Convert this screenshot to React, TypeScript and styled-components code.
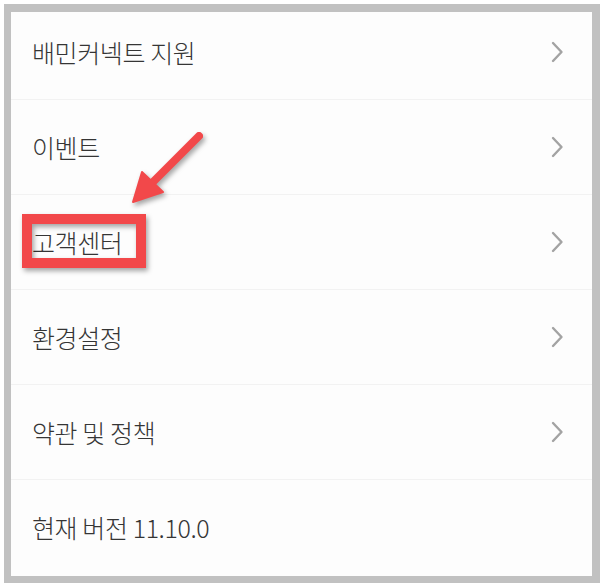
import React from "react";
import styled, { createGlobalStyle } from "styled-components";

const Global = createGlobalStyle`
  html, body { margin: 0; padding: 0; background: #ffffff; }
  body { font-family: "Noto Sans CJK KR", "Noto Sans", sans-serif; }
`;

const Page = styled.div`
  position: relative;
  width: 604px;
  height: 587px;
  padding: 4px;
  box-sizing: border-box;
  background: #ffffff;
`;

const Frame = styled.div`
  height: 100%;
  box-sizing: border-box;
  border-style: solid;
  border-color: #c1c1c1;
  border-width: 8px 8px 7px 7px;
  background: #fdfdfd;
  overflow: hidden;
`;

const List = styled.ul`
  list-style: none;
  margin: -7px 0 0 0;
  padding: 0;
`;

const Row = styled.li`
  display: flex;
  align-items: center;
  justify-content: space-between;
  height: 94px;
  padding: 0 28px 0 21px;
  border-bottom: 1px solid #f2f2f2;
  &:last-child { border-bottom: none; }
`;

const Label = styled.span`
  font-family: "Liberation Sans Narrow", "Noto Sans CJK KR", "Noto Sans", sans-serif;
  font-size: 25px;
  font-weight: 300;
  letter-spacing: -0.4px;
  color: #353535;
  line-height: 1;
`;

const Chevron = styled.svg`
  width: 14px;
  height: 22px;
  flex: none;
`;

const Overlay = styled.svg`
  position: absolute;
  left: 0;
  top: 0;
  width: 604px;
  height: 587px;
  pointer-events: none;
  filter: drop-shadow(2px 3px 2.5px rgba(0, 0, 0, 0.35));
`;

const items = [
  { label: "배민커넥트 지원", arrow: true },
  { label: "이벤트", arrow: true },
  { label: "고객센터", arrow: true },
  { label: "환경설정", arrow: true },
  { label: "약관 및 정책", arrow: true },
  { label: "현재 버전 11.10.0", arrow: false },
];

export default function App() {
  return (
    <>
      <Global />
      <Page>
        <Frame>
          <List>
            {items.map((it) => (
              <Row key={it.label}>
                <Label>{it.label}</Label>
                {it.arrow && (
                  <Chevron viewBox="0 0 14 22">
                    <path
                      d="M3 2 L11.5 11 L3 20"
                      fill="none"
                      stroke="#a3a3a3"
                      strokeWidth="2.4"
                      strokeLinecap="round"
                      strokeLinejoin="round"
                    />
                  </Chevron>
                )}
              </Row>
            ))}
          </List>
        </Frame>
        <Overlay viewBox="0 0 604 587">
          <rect x="27" y="219" width="114" height="44" fill="none" stroke="#f2484a" strokeWidth="10" />
          <line x1="199" y1="136" x2="152" y2="183" stroke="#f2484a" strokeWidth="8" strokeLinecap="round" />
          <polygon points="133,202 142,172 163,192" fill="#f2484a" stroke="#f2484a" strokeWidth="2" strokeLinejoin="round" />
        </Overlay>
      </Page>
    </>
  );
}
